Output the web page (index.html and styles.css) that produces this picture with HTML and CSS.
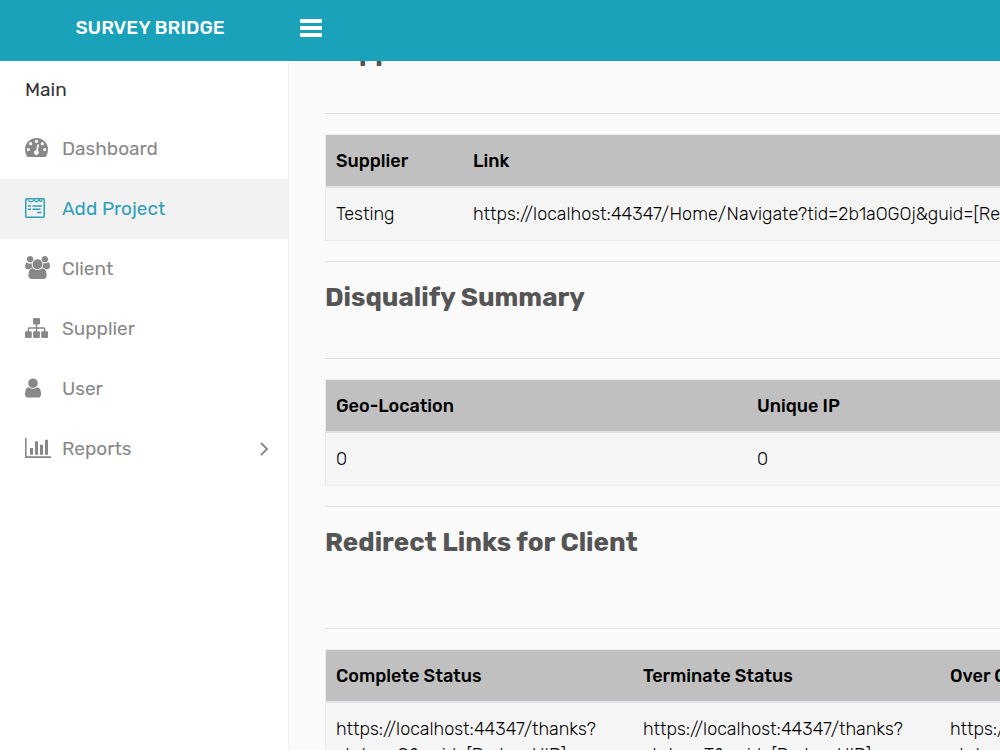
FILE: index.html
```html
<!DOCTYPE html>
<html lang="en">
<head>
  <meta charset="UTF-8">
  <title>Survey Bridge</title>
  <meta name="viewport" content="width=device-width, initial-scale=1.0">
  <link rel="stylesheet" href="styles.css">
</head>
<body>

  <header class="topbar">
    <a class="brand" href="#">SURVEY BRIDGE</a>
    <button class="menu-toggle" type="button" aria-label="Toggle menu">
      <svg width="22" height="18" viewBox="0 0 22 18"><path d="M0 1q0-1 1-1h20q1 0 1 1v2q0 1-1 1H1q-1 0-1-1zM0 8q0-1 1-1h20q1 0 1 1v2q0 1-1 1H1q-1 0-1-1zM0 15q0-1 1-1h20q1 0 1 1v2q0 1-1 1H1q-1 0-1-1z"/></svg>
    </button>
  </header>

  <div class="page">
    <nav class="sidebar">
      <h3 class="menu-title">Main</h3>
      <ul class="menu">
        <li><a href="#">
          <span class="icon"><svg width="23" height="19" viewBox="0 0 23 19"><path fill-rule="evenodd" d="M11.500 0A11.500 11.500 0 0 1 23 11.500Q23 15 21.200 18.200Q20.800 19 20 19H3Q2.200 19 1.800 18.200Q0 15 0 11.500A11.500 11.500 0 0 1 11.500 0zM11.500 1.700a1.600 1.600 0 1 0 0 3.200a1.600 1.600 0 1 0 0-3.200zM5.700 4.100a1.600 1.600 0 1 0 0 3.200a1.600 1.600 0 1 0 0-3.200zM17.300 4.100a1.600 1.600 0 1 0 0 3.200a1.600 1.600 0 1 0 0-3.200zM3.300 9.900a1.600 1.600 0 1 0 0 3.200a1.600 1.600 0 1 0 0-3.200zM19.700 9.900a1.600 1.600 0 1 0 0 3.200a1.600 1.600 0 1 0 0-3.200zM12.200 6.900l-1 5.300a2.400 2.400 0 1 0 1.700.5l1-5.200a.85.85 0 0 0-1.700-.6z"/></svg></span>
          Dashboard</a></li>
        <li class="active"><a href="#">
          <span class="icon"><svg width="20" height="20" viewBox="0 0 20 20"><g fill="none" stroke="currentColor"><rect x=".75" y=".75" width="18.500" height="18.500" rx="1" stroke-width="1.500"/><path d="M3 1.500q1 2.300 3 2.300T9 1.800q1 2 2.500 2t2.500-2q1 2 2 1.600t1-1.900" stroke-width="1.300"/><path d="M3 8h3M7.500 8h9.500M3 11.200h3M7.500 11.200h8M12 14.500h4.500" stroke-width="1.500"/></g></svg></span>
          Add Project</a></li>
        <li><a href="#">
          <span class="icon"><svg width="25" height="23" viewBox="64 0 1920 1792"><path d="M657 896q-162 5-265 128h-134q-82 0-138-40.500t-56-118.500q0-353 124-353 6 0 43.500 21t97.500 42.500 119 21.500q67 0 133-23-5 37-5 66 0 159 90 290zm1071 637q0 120-73 189.500t-194 69.500h-874q-121 0-194-69.500t-73-189.500q0-53 3.500-103.500t14-109 26.500-108.500 43-97.500 62-81 85.500-53.500 111.500-20q10 0 43 21.500t73 48 107 48 135 21.500 135-21.500 107-48 73-48 43-21.500q61 0 111.500 20t85.500 53.500 62 81 43 97.500 26.500 108.500 14 109 3.500 103.500zm-1024-1277q0 106-75 181t-181 75-181-75-75-181 75-181 181-75 181 75 75 181zm704 384q0 159-112.500 271.500t-271.500 112.500-271.500-112.500-112.500-271.500 112.500-271.500 271.500-112.500 271.500 112.500 112.500 271.500zm576 225q0 78-56 118.500t-138 40.500h-134q-103-123-265-128 90-131 90-290 0-29-5-66 66 23 133 23 59 0 119-21.500t97.500-42.500 43.500-21q124 0 124 353zm-128-609q0 106-75 181t-181 75-181-75-75-181 75-181 181-75 181 75 75 181z"/></svg></span>
          Client</a></li>
        <li><a href="#">
          <span class="icon"><svg width="23" height="20" viewBox="0 0 23 20"><rect x="8" width="7" height="6.500" rx="1"/><rect y="13.200" width="6.800" height="6.800" rx="1"/><rect x="8.100" y="13.200" width="6.800" height="6.800" rx="1"/><rect x="16.200" y="13.200" width="6.800" height="6.800" rx="1"/><path d="M11.500 6v8M3.400 14v-3.200q0-.8.8-.8h14.600q.8 0 .8.8V14" fill="none" stroke="currentColor" stroke-width="1.500"/></svg></span>
          Supplier</a></li>
        <li><a href="#">
          <span class="icon"><svg width="16" height="20" viewBox="256 128 1280 1536"><path d="M1536 1399q0 109-62.500 187t-150.500 78h-854q-88 0-150.500-78t-62.500-187q0-85 8.500-160.500t31.500-152 58.500-131 94-89 134.500-34.500q131 128 313 128t313-128q76 0 134.500 34.500t94 89 58.500 131 31.500 152 8.500 160.500zm-256-887q0 159-112.500 271.500t-271.500 112.500-271.500-112.500-112.500-271.500 112.500-271.500 271.500-112.500 271.500 112.500 112.500 271.500z"/></svg></span>
          User</a></li>
        <li><a href="#">
          <span class="icon"><svg width="26" height="20" viewBox="0 0 26 20"><path d="M0 0h1.600v18.300H26V20H0zM5 10h3v6.700H5zM10 3.300h3v13.400h-3zM15 6.700h3v10h-3zM20 1.700h3v15h-3z"/></svg></span>
          Reports
          <svg class="chevron" width="9" height="14" viewBox="0 0 9 14"><path d="M1 1l6 6L1 13" fill="none" stroke="currentColor" stroke-width="1.900"/></svg></a></li>
      </ul>
    </nav>

    <main class="content">
      <section>
        <h2 class="first">Supplier</h2>
        <hr>
        <table class="suppliers">
          <thead>
            <tr><th>Supplier</th><th>Link</th></tr>
          </thead>
          <tbody>
            <tr><td>Testing</td><td>https://localhost:44347/Home/Navigate?tid=2b1aOGOj&amp;guid=[RespondentID]</td></tr>
          </tbody>
        </table>
        <hr>
      </section>

      <section>
        <h2>Disqualify Summary</h2>
        <hr>
        <table class="disqualify">
          <thead>
            <tr><th>Geo-Location</th><th>Unique IP</th></tr>
          </thead>
          <tbody>
            <tr><td>0</td><td>0</td></tr>
          </tbody>
        </table>
        <hr>
      </section>

      <section>
        <h2 class="tall">Redirect Links for Client</h2>
        <hr>
        <table class="redirects">
          <thead>
            <tr><th>Complete Status</th><th>Terminate Status</th><th>Over Quota Status</th></tr>
          </thead>
          <tbody>
            <tr>
              <td>https://localhost:44347/thanks?<br>status=C&amp;guid=[PartnerUID]</td>
              <td>https://localhost:44347/thanks?<br>status=T&amp;guid=[PartnerUID]</td>
              <td>https://localhost:44347/thanks?<br>status=O&amp;guid=[PartnerUID]</td>
            </tr>
          </tbody>
        </table>
      </section>
    </main>
  </div>

</body>
</html>
```
FILE: styles.css
```css
* {
  box-sizing: border-box;
}
body {
  background-color: #fafafa;
  color: #000;
  display: flex;
  flex-direction: column;
  font-family: Rubik, Roboto, sans-serif;
  font-size: 18px;
  font-weight: 300;
  height: 100vh;
  line-height: 26px;
  margin: 0;
  overflow: hidden;
}
svg {
  display: block;
  fill: currentColor;
}

/* top bar */
.topbar {
  align-items: center;
  background-color: #19a2b9;
  color: #fff;
  display: flex;
  flex: none;
  height: 61px;
  padding-bottom: 5px;
}
.brand {
  color: #fff;
  font-size: 19px;
  font-weight: 500;
  text-align: center;
  text-decoration: none;
  width: 300px;
}
.menu-toggle {
  background: none;
  border: 0;
  color: #fff;
  cursor: pointer;
  padding: 0;
}

.page {
  display: flex;
  flex: 1;
  min-height: 0;
}

/* sidebar */
.sidebar {
  background-color: #fff;
  border-right: 1px solid #eee;
  flex: none;
  width: 289px;
}
.menu-title {
  color: #333;
  font-size: 19px;
  font-weight: 400;
  margin: 16px 25px;
}
.menu {
  list-style: none;
  margin: 0;
  padding: 0;
}
.menu a {
  align-items: center;
  color: #888;
  display: flex;
  font-size: 19px;
  font-weight: 400;
  height: 60px;
  padding: 0 19px 1px 25px;
  text-decoration: none;
}
.menu .active a {
  background-color: #f2f2f2;
  color: #2f9fb8;
}
.icon {
  flex: none;
  margin-bottom: 2px;
  width: 37px;
}
.chevron {
  margin-left: auto;
}

/* content */
.content {
  flex: 1;
  min-width: 0;
  overflow: hidden;
  padding-left: 36px;
}
.content section {
  min-width: 1228px;
}
h2 {
  color: #555;
  font-size: 26px;
  font-weight: 700;
  line-height: 32px;
  margin: 0;
  padding-bottom: 24px;
}
h2.first {
  margin-top: -24px;
}
h2.tall {
  padding-bottom: 49px;
}
hr {
  border: 0;
  border-top: 1px solid #dee0e2;
  margin: 20px 0;
}
table {
  background-color: #f5f5f5;
  border: 1px solid #e9ebec;
  border-spacing: 0;
  table-layout: fixed;
  width: 100%;
}
th,
td {
  padding: 13px 10px 12px;
  text-align: left;
}
td {
  padding-bottom: 13px;
}
th {
  background-color: #c0c0c0;
  border-bottom: 2px solid #dee2e6;
  font-weight: 500;
}
.suppliers th:first-child {
  width: 137px;
}
.disqualify th:first-child {
  width: 421px;
}
.redirects th {
  width: 307px;
}
.redirects th:last-child {
  width: auto;
}
```
